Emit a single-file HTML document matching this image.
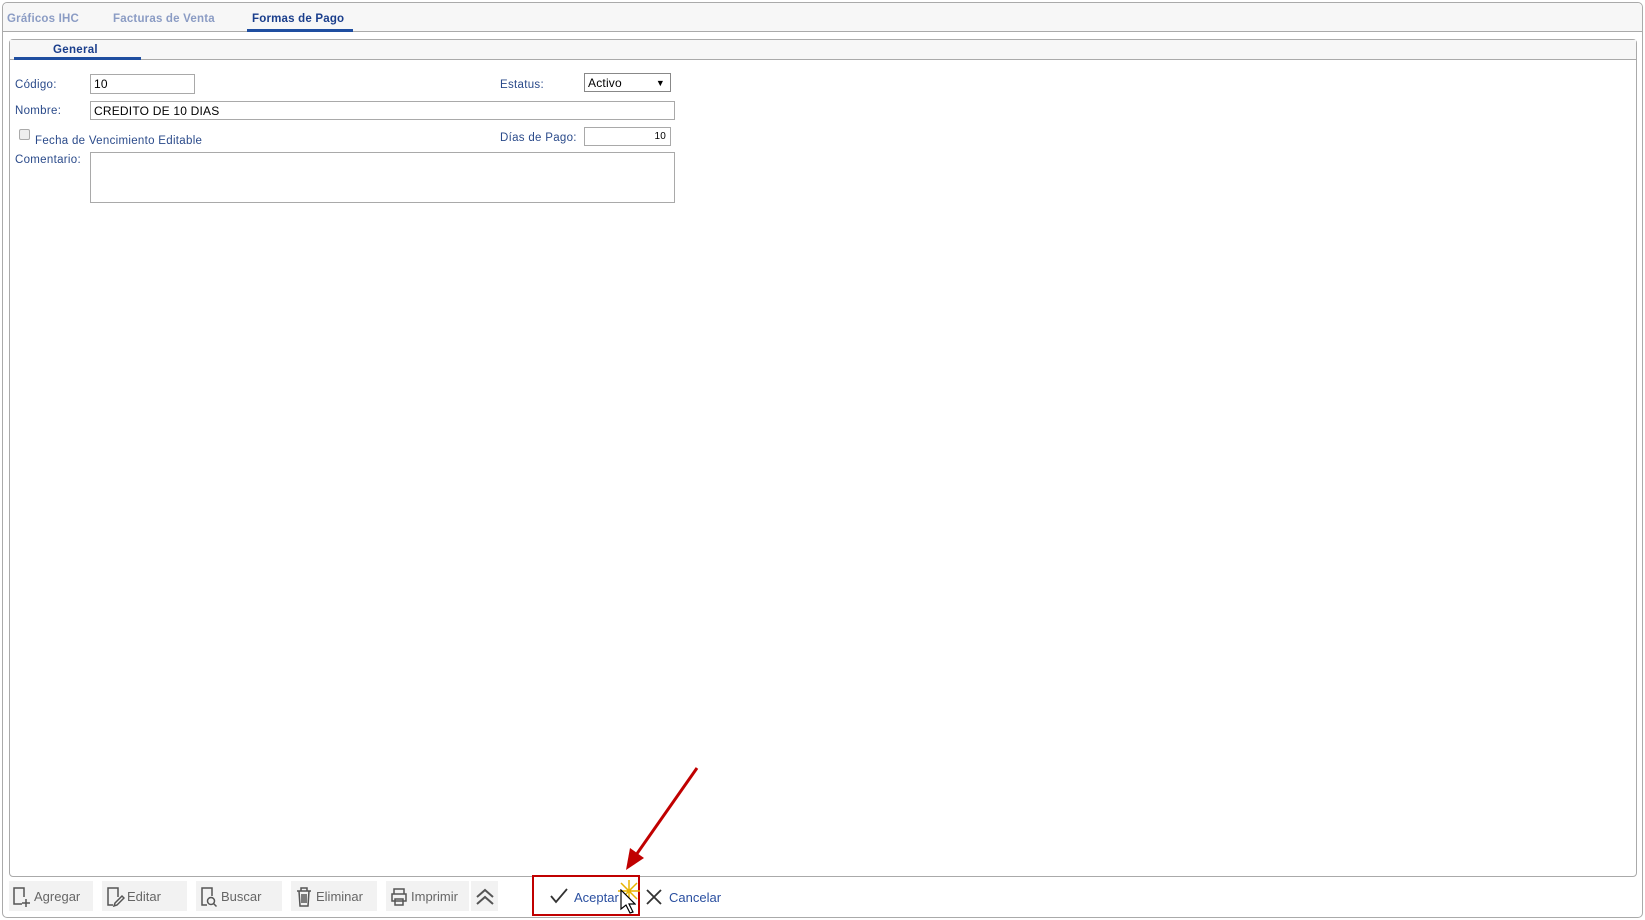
<!DOCTYPE html>
<html><head><meta charset="utf-8"><style>
*{box-sizing:border-box;margin:0;padding:0}
body{width:1645px;height:920px;background:#fff;font-family:"Liberation Sans",sans-serif;position:relative;overflow:hidden}
.a{position:absolute}
.lbl{position:absolute;font-size:11.5px;color:#2a4a8a;letter-spacing:0.3px}
.inp{position:absolute;border:1px solid #a9a9a9;background:#fff;font-size:12px;color:#000;padding-left:3px;line-height:18px;letter-spacing:0.2px}
.btn{position:absolute;top:881px;height:30px;background:#f2f2f2;font-size:13px;color:#666;line-height:32px}
.btn svg{position:absolute;left:3px;top:5px}
.btn span{position:absolute;left:25px}
.tab{position:absolute;top:13px;font-size:11.5px;font-weight:bold;letter-spacing:0.2px}
</style></head><body>
<div class="a" style="left:2px;top:2px;width:1641px;height:916px;border:1px solid #aaa;border-radius:5px"></div>
<div class="a" style="left:3px;top:3px;width:1639px;height:29px;background:#f7f7f7;border-bottom:1px solid #aaa;border-radius:5px 5px 0 0"></div>
<div class="tab" style="left:7px;color:#8b9cc4">Gráficos IHC</div>
<div class="tab" style="left:113px;color:#8b9cc4">Facturas de Venta</div>
<div class="tab" style="left:252px;color:#1a3e8c">Formas de Pago</div>
<div class="a" style="left:247px;top:29px;width:106px;height:3px;background:#1f4ea0"></div>

<div class="a" style="left:9px;top:39px;width:1628px;height:838px;border:1px solid #aaa;border-radius:4px"></div>
<div class="a" style="left:10px;top:40px;width:1626px;height:20px;background:#f7f7f7;border-bottom:1px solid #aaa"></div>
<div class="a" style="left:53px;top:44px;font-size:11.5px;font-weight:bold;color:#1a3e8c;letter-spacing:0.3px">General</div>
<div class="a" style="left:14px;top:57px;width:127px;height:3px;background:#1f4ea0"></div>

<div class="lbl" style="left:15px;top:79px">Código:</div>
<div class="inp" style="left:90px;top:74px;width:105px;height:20px">10</div>
<div class="lbl" style="left:500px;top:79px">Estatus:</div>
<div class="inp" style="left:584px;top:73px;width:87px;height:19px;border-color:#888">Activo<span style="position:absolute;right:5px;font-size:9px">▼</span></div>
<div class="lbl" style="left:15px;top:105px">Nombre:</div>
<div class="inp" style="left:90px;top:101px;width:585px;height:19px">CREDITO DE 10 DIAS</div>
<div class="a" style="left:19px;top:129px;width:11px;height:11px;border:1px solid #aaa;border-radius:2px;background:#eee"></div>
<div class="lbl" style="left:35px;top:135px">Fecha de Vencimiento Editable</div>
<div class="lbl" style="left:500px;top:132px">Días de Pago:</div>
<div class="inp" style="left:584px;top:127px;width:87px;height:19px;text-align:right;padding-right:4px;font-size:10px">10</div>
<div class="lbl" style="left:15px;top:154px">Comentario:</div>
<div class="inp" style="left:90px;top:152px;width:585px;height:51px"></div>

<div class="btn" style="left:9px;width:84px"><svg width="20" height="22" viewBox="0 0 20 22" fill="none" stroke="#555" stroke-width="1.5"><path d="M10 18H2V2h10v9"/><path d="M14 13v8M10 17h8"/></svg><span>Agregar</span></div>
<div class="btn" style="left:102px;width:85px"><svg width="20" height="22" viewBox="0 0 20 22" fill="none" stroke="#555" stroke-width="1.5"><path d="M8 19H3V2h10v9"/><path d="M9 20l1-3 7-7 2 2-7 7z"/></svg><span>Editar</span></div>
<div class="btn" style="left:196px;width:86px"><svg width="20" height="22" viewBox="0 0 20 22" fill="none" stroke="#555" stroke-width="1.5"><path d="M8 19H3V2h10v8"/><circle cx="12" cy="15" r="3.5"/><path d="M14.5 17.5l3 3"/></svg><span>Buscar</span></div>
<div class="btn" style="left:291px;width:86px"><svg width="20" height="22" viewBox="0 0 20 22" fill="none" stroke="#555" stroke-width="1.5"><path d="M3 5h14M7 5V2h6v3M5 5l1 15h8l1-15M8 8v9M10 8v9M12 8v9"/></svg><span>Eliminar</span></div>
<div class="btn" style="left:386px;width:83px"><svg width="20" height="22" viewBox="0 0 20 22" fill="none" stroke="#555" stroke-width="1.5"><path d="M5 8V3h10v5M3 8h14v7H3zM6 13h8v6H6z"/></svg><span>Imprimir</span></div>
<div class="btn" style="left:471px;width:27px"><svg width="22" height="22" viewBox="0 0 22 22" fill="none" stroke="#555" stroke-width="2"><path d="M3 11l8-7 8 7M3 18l8-7 8 7"/></svg></div>

<div class="a" style="left:532px;top:875px;width:108px;height:41px;border:2px solid #c00000"></div>
<svg class="a" style="left:549px;top:887px" width="20" height="18" viewBox="0 0 20 18" fill="none" stroke="#333" stroke-width="1.8"><path d="M2 9l5 6L18 2"/></svg>
<div class="a" style="left:574px;top:890px;font-size:13px;color:#2a4fa0">Aceptar</div>
<svg class="a" style="left:616px;top:878px" width="26" height="26" viewBox="0 0 26 26" stroke="#e8b400" stroke-width="1.5"><path d="M13 2v22M2 13h22M5 5l16 16M21 5L5 21"/></svg>
<svg class="a" style="left:620px;top:889px" width="16" height="26" viewBox="0 0 16 26"><path d="M1 1v19l5-4 4 8 3-1-4-8h6z" fill="#fff" stroke="#000" stroke-width="1.2"/></svg>
<svg class="a" style="left:645px;top:888px" width="18" height="18" viewBox="0 0 18 18" stroke="#333" stroke-width="1.8"><path d="M2 2l14 14M16 2L2 16"/></svg>
<div class="a" style="left:669px;top:890px;font-size:13px;color:#2a4fa0">Cancelar</div>

<svg class="a" style="left:600px;top:760px" width="110" height="120" viewBox="600 760 110 120"><path d="M697 768L636 855" stroke="#c00000" stroke-width="3"/><path d="M626 870l4-22 14 10z" fill="#c00000"/></svg>
</body></html>
